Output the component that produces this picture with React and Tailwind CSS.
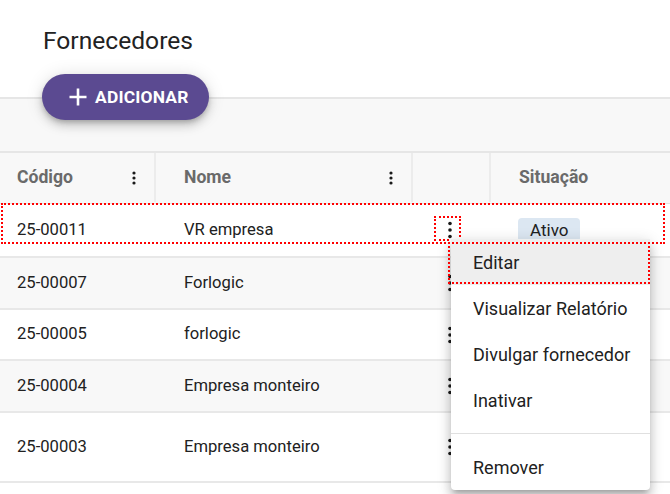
import React from "react";

function Kebab({ small }) {
  if (small) {
    return (
      <svg width="6" height="16" viewBox="0 0 6 16" className="block">
        <circle cx="3" cy="3" r="1.6" fill="#1a1a1a" />
        <circle cx="3" cy="8" r="1.6" fill="#1a1a1a" />
        <circle cx="3" cy="13" r="1.6" fill="#1a1a1a" />
      </svg>
    );
  }
  return (
    <svg width="6" height="18" viewBox="0 0 6 18" className="block">
      <circle cx="3" cy="2.5" r="1.8" fill="#1a1a1a" />
      <circle cx="3" cy="9" r="1.8" fill="#1a1a1a" />
      <circle cx="3" cy="15.5" r="1.8" fill="#1a1a1a" />
    </svg>
  );
}

const rows = [
  { code: "25-00011", name: "VR empresa", h: "h-[54px]", bg: "bg-white", badge: true },
  { code: "25-00007", name: "Forlogic", h: "h-[52px]", bg: "bg-[#f8f8f8]" },
  { code: "25-00005", name: "forlogic", h: "h-[51px]", bg: "bg-white" },
  { code: "25-00004", name: "Empresa monteiro", h: "h-[52px]", bg: "bg-[#f8f8f8]" },
  { code: "25-00003", name: "Empresa monteiro", h: "h-[70px]", bg: "bg-white" },
];

export default function App() {
  return (
    <div className="relative w-[670px] h-[494px] overflow-hidden bg-white font-['Roboto',sans-serif] text-[#212121]">
      <div className="pl-[43px] pt-[27px] text-[24.6px] leading-[28px] text-[#222]">Fornecedores</div>
      <div className="relative z-10 mt-[19px] pl-[42px]">
        <button className="flex h-[46px] w-[167px] items-center gap-[7px] rounded-full bg-[#5b4a91] pl-[26px] text-[17.4px] font-bold tracking-[0.2px] text-white shadow-[0_3px_5px_-1px_rgba(0,0,0,0.2),0_6px_10px_0_rgba(0,0,0,0.14),0_1px_18px_0_rgba(0,0,0,0.12)]">
          <svg width="20" height="20" viewBox="0 0 20 20">
            <path d="M10 1.5v17M1.5 10h17" stroke="white" strokeWidth="2.6" />
          </svg>
          <span>ADICIONAR</span>
        </button>
      </div>
      <div className="-mt-[23px] h-[56px] border-y-2 border-[#e6e6e6] bg-[#f8f8f8]" />
      <div className="flex h-[51px] border-b border-[#e4e4e4] bg-[#f8f8f8] pb-[1px] text-[17.6px] font-bold text-[#6a6a6a]">
        <div className="flex w-[156px] items-center justify-between border-r-2 border-[#ececec] pl-[17px] pr-[17px]">
          <span>Código</span>
          <Kebab small />
        </div>
        <div className="flex w-[257px] items-center justify-between border-r-2 border-[#ececec] pl-[28px] pr-[17px]">
          <span>Nome</span>
          <Kebab small />
        </div>
        <div className="w-[78px] border-r-2 border-[#ececec]" />
        <div className="flex flex-1 items-center pl-[28px]">Situação</div>
      </div>
      {rows.map((r, i) => (
        <div key={i} className={`flex ${r.h} ${r.bg} items-center border-b-2 border-[#e8e8e8] text-[16.6px] text-[#212121]`}>
          <div className="w-[156px] pl-[17px]">{r.code}</div>
          <div className="w-[257px] pl-[28px]">{r.name}</div>
          <div className="flex w-[78px] justify-center pr-[4px]">
            <Kebab />
          </div>
          <div className="flex-1 pl-[27px]">
            {r.badge && (
              <span className="mt-[2px] inline-flex h-[24px] items-center rounded-[4px] bg-[#dce7f2] px-[12px] text-[17px]">Ativo</span>
            )}
          </div>
        </div>
      ))}

      <div className="absolute left-[1px] top-[203px] h-[41px] w-[664px] border-2 border-dotted border-[#ff0000]" />
      <div className="absolute left-[434px] top-[216px] h-[25px] w-[27px] border-2 border-dotted border-[#ff0000]" />

      <div className="absolute left-[451px] top-[239px] w-[199px] rounded-[4px] bg-white text-[18px] text-[#212121] shadow-[0_5px_5px_-3px_rgba(0,0,0,0.2),0_8px_10px_1px_rgba(0,0,0,0.14),0_3px_14px_2px_rgba(0,0,0,0.12)]">
        <div className="relative flex h-[46px] items-center bg-[#eeeeee] pl-[22px]">
          Editar
          <div className="absolute -left-[3px] right-0 top-[3px] bottom-[1px] border-2 border-dotted border-[#ff0000]" />
        </div>
        <div className="flex h-[46px] items-center pl-[22px]">Visualizar Relatório</div>
        <div className="flex h-[46px] items-center pl-[22px]">Divulgar fornecedor</div>
        <div className="flex h-[46px] items-center pl-[22px]">Inativar</div>
        <div className="my-[10px] h-px bg-[#e0e0e0]" />
        <div className="flex h-[46px] items-center pl-[22px]">Remover</div>
      </div>
    </div>
  );
}
